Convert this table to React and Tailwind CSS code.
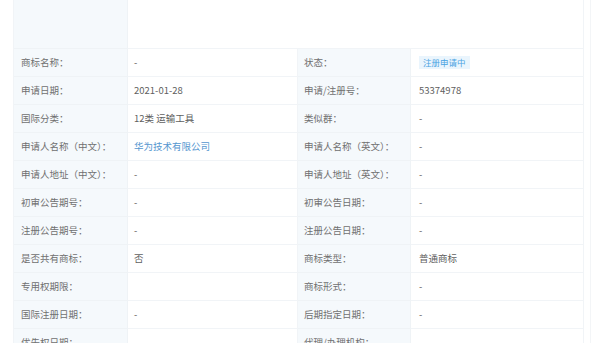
import React from 'react';

const rows = [
    { l1: '商标名称：', v1: '-', l2: '状态：', v2: '注册申请中', tag: true },
    { l1: '申请日期：', v1: '2021-01-28', l2: '申请/注册号：', v2: '53374978' },
    { l1: '国际分类：', v1: '12类 运输工具', l2: '类似群：', v2: '-' },
    { l1: '申请人名称（中文）：', v1: '华为技术有限公司', link: true, l2: '申请人名称（英文）：', v2: '-' },
    { l1: '申请人地址（中文）：', v1: '-', l2: '申请人地址（英文）：', v2: '-' },
    { l1: '初审公告期号：', v1: '-', l2: '初审公告日期：', v2: '-' },
    { l1: '注册公告期号：', v1: '-', l2: '注册公告日期：', v2: '-' },
    { l1: '是否共有商标：', v1: '否', l2: '商标类型：', v2: '普通商标' },
    { l1: '专用权期限：', v1: '', l2: '商标形式：', v2: '-' },
    { l1: '国际注册日期：', v1: '-', l2: '后期指定日期：', v2: '-' },
    { l1: '优先权日期：', v1: '-', l2: '代理/办理机构：', v2: '-' },
];

const labelCls = 'h-[28px] flex items-center bg-[#f5f9fc] border-b border-r border-[#eff3f6] text-[#707070]';
const valueCls = 'h-[28px] flex items-center border-b border-r border-[#f1f4f7] text-[#606060]';

export default function App() {
    return (
        <div
            className="w-[600px] h-[343px] overflow-hidden bg-white flex text-[9.5px]"
            style={{ fontFamily: '"Noto Sans CJK SC", "Noto Sans", sans-serif' }}
        >
            <div className="w-[13px] shrink-0" />
            <div className="w-[570px] shrink-0 grid grid-cols-[114px_170px_113px_173px] border-l border-[#f1f4f7]">
                {/* top image row */}
                <div className="h-[49px] bg-[#f5f9fc] border-b border-r border-[#eff3f6]" />
                <div className="h-[49px] col-span-3 border-b border-r border-[#f1f4f7]" />

                {rows.map((r, i) => (
                    <React.Fragment key={i}>
                        <div className={`${labelCls} pl-[7px]`}>{r.l1}</div>
                        <div className={`${valueCls} pl-[6px]`}>
                            <span className={r.link ? 'text-[#5596cf]' : ''}>{r.v1}</span>
                        </div>
                        <div className={`${labelCls} pl-[6px]`}>{r.l2}</div>
                        <div className={`${valueCls} pl-[8px]`}>
                            {r.tag ? (
                                <span className="px-[4px] h-[13px] leading-[13px] bg-[#eaf5fd] text-[#4aa3e2] text-[8.5px]">
                                    {r.v2}
                                </span>
                            ) : (
                                r.v2
                            )}
                        </div>
                    </React.Fragment>
                ))}
            </div>
            <div className="w-[7px] shrink-0" />
            <div className="w-px shrink-0 bg-[#f3f5f7]" />
        </div>
    );
}
